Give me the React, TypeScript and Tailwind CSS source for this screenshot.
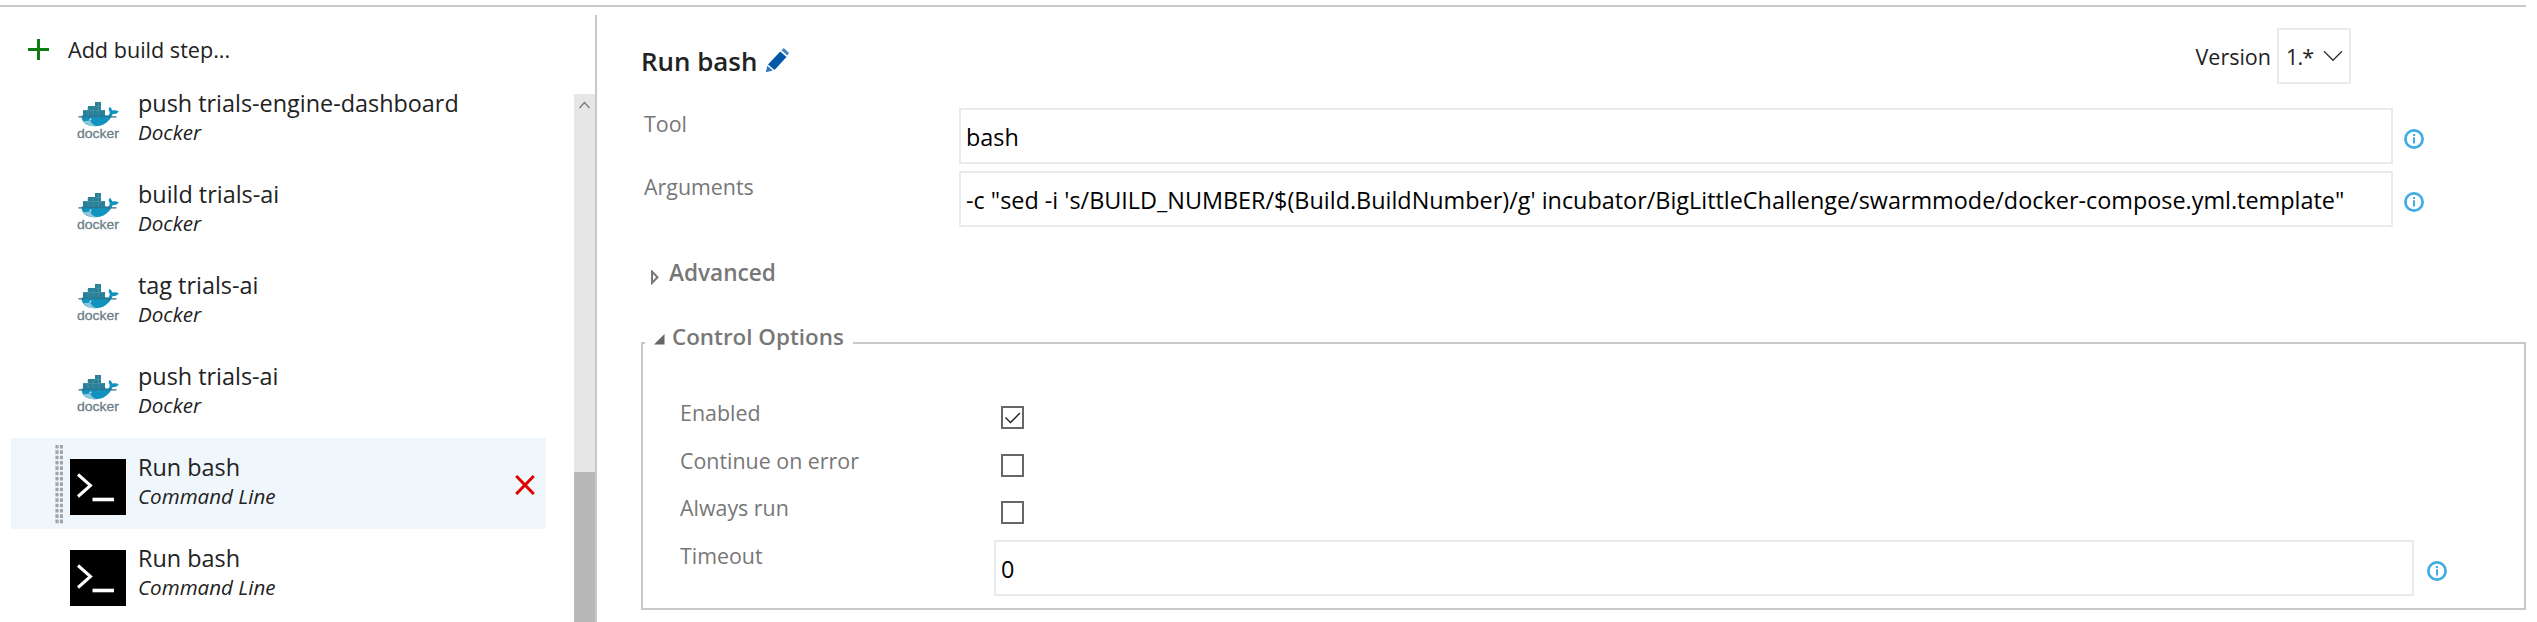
type Step = { name: string; kind: "Docker" | "Command Line"; selected?: boolean };

const steps: Step[] = [
  { name: "push trials-engine-dashboard", kind: "Docker" },
  { name: "build trials-ai", kind: "Docker" },
  { name: "tag trials-ai", kind: "Docker" },
  { name: "push trials-ai", kind: "Docker" },
  { name: "Run bash", kind: "Command Line", selected: true },
  { name: "Run bash", kind: "Command Line" },
];

function DockerIcon() {
  return (
    <svg width="56" height="56" viewBox="0 0 56 56" className="block">
      <path d="M13 22v-7h5v-4h7V7h6v8h4v7z" fill="#2a8097" />
      <path d="M13 15.500h21M18 12v10M23 12v10M28.500 8v14M25 11.500h6" stroke="#4f98ab" strokeWidth="0.600" fill="none" />
      <path d="M11.500 20.500h26c2-.5 2.600-2 2-4-1.300-1.800-.8-3.500.2-4.500 1.600 1 2.300 2.300 2.500 3.600 2-.7 4.500-.4 6.600.6-1.200 2.200-3.500 3-6 2.900C39.500 27 33.500 31.300 25 31.300c-8.500 0-13.500-3.800-13.500-10.800z" fill="#1192bf" />
      <path d="M13.500 26c3 .2 5 0 6.500-1 1 3 3 5.200 6.500 6-6 .8-11-1-13-5z" fill="#8fc7da" />
      <path d="M8.500 21.800h6l2-1 3 1 3-1 3 1 3-1 3 1 3-1 3 1h9" fill="none" stroke="#356f80" strokeWidth="1.200" />
      <circle cx="20.500" cy="24.300" r="0.900" fill="#e8f5f9" />
      <text x="7" y="43.300" textLength="42" lengthAdjust="spacingAndGlyphs" fill="#6b7d86" stroke="#6b7d86" strokeWidth="0.300" className="font-['Liberation_Sans'] text-[13.500px]">docker</text>
    </svg>
  );
}

function TerminalIcon() {
  return (
    <svg width="56" height="56" viewBox="0 0 56 56" className="block bg-black">
      <path d="M8 15.500L20.500 26.500L8 37.500" fill="none" stroke="#fff" strokeWidth="3" />
      <path d="M22.500 40.500H44" stroke="#fff" strokeWidth="3.600" />
    </svg>
  );
}

function InfoIcon() {
  return (
    <svg width="20" height="20" viewBox="0 0 20 20" className="block shrink-0">
      <circle cx="10" cy="10" r="8.600" fill="none" stroke="#3fade3" strokeWidth="2.700" />
      <path d="M10 8.300v6.200M10 5v2" stroke="#3fade3" strokeWidth="2" />
    </svg>
  );
}

function DragHandle() {
  return (
    <svg width="8" height="79" viewBox="0 0 8 79" className="block">
      <path d="M2 0V79M6.500 0V79" stroke="#a0a5a9" strokeWidth="3.200" strokeDasharray="3.600 1.730" />
    </svg>
  );
}

function StepRow({ step }: { step: Step }) {
  return (
    <li className={step.selected ? "flex h-[91px] w-[535px] bg-[#eff6fc]" : "flex h-[91px] w-[535px]"}>
      <div className="w-[59px] shrink-0 pt-[7px] pl-11">{step.selected && <DragHandle />}</div>
      <div className="w-[68px] shrink-0 pt-[21px]">{step.kind === "Docker" ? <DockerIcon /> : <TerminalIcon />}</div>
      <div className="grow pt-[15px] whitespace-nowrap">
        <div className="text-[23.4px] leading-[28px]">{step.name}</div>
        <div className="text-[20.6px] leading-[30px] italic">{step.kind}</div>
      </div>
      {step.selected && (
        <svg width="20" height="20" viewBox="0 0 20 20" className="mt-[37px] mr-[11px] shrink-0">
          <path d="M1.200 1L18.800 19M18.800 1L1.200 19" stroke="#e00000" strokeWidth="3" />
        </svg>
      )}
    </li>
  );
}

function TextField({ value, className }: { value: string; className: string }) {
  return (
    <div className={`h-14 border-2 border-[#eaeaea] pl-[5px] pt-[2px] text-[23.4px] leading-[50px] whitespace-nowrap text-black ${className}`}>
      {value}
    </div>
  );
}

function Checkbox({ checked }: { checked?: boolean }) {
  return (
    <div className="h-[23px] w-[23px] border-2 border-[#666]">
      {checked && (
        <svg width="19" height="19" viewBox="0 0 19 19" className="block">
          <path d="M2.500 9.500L7.500 14.500L17 5" fill="none" stroke="#222" strokeWidth="1.400" />
        </svg>
      )}
    </div>
  );
}

export default function App() {
  return (
    <div className="h-[622px] overflow-hidden bg-white pt-[5px] pr-[11px] font-['Open_Sans','Noto_Sans',sans-serif] text-[#222]">
      <div className="h-[2px] bg-[#c8c8c8]" />
      <div className="flex h-[615px]">
        <aside className="mt-2 flex w-[597px] shrink-0 flex-col border-r-2 border-[#c8c8c8]">
          <div className="flex h-[59px] shrink-0 pl-7">
            <svg width="21" height="21" viewBox="0 0 21 21" className="mt-6 mr-[19px] shrink-0">
              <path d="M10.500 0V21M0 10.500H21" stroke="#107c10" strokeWidth="3" />
            </svg>
            <div className="pt-[22px] text-[21.6px] leading-[26px]">Add build step...</div>
          </div>
          <div className="flex min-h-0 grow">
            <ul className="w-[574px] pl-[11px]">
              {steps.map((step, i) => (
                <StepRow key={i} step={step} />
              ))}
            </ul>
            <div className="mt-5 flex w-[21px] shrink-0 flex-col bg-[#e6e6e6]">
              <svg width="21" height="21" viewBox="0 0 21 21" className="shrink-0">
                <path d="M5.500 14L10.500 8.500L15.500 14" fill="none" stroke="#777" strokeWidth="1.200" />
              </svg>
              <div className="mt-[357px] grow bg-[#b8b8b8]" />
            </div>
          </div>
        </aside>

        <main className="flex grow flex-col pl-11">
          <div className="flex h-[101px] shrink-0">
            <h1 className="pt-[38px] text-[25.9px] leading-[32px] font-semibold">Run bash</h1>
            <svg width="24" height="25" viewBox="0 0 24 25" className="mt-[41px] ml-[8px]">
              <path d="M15.200 3.500L21.500 9L9.500 22L3 16.500z" fill="#0058a8" />
              <path d="M2.300 17.800L7.700 22.600L.8 24.200z" fill="#2f78b8" />
              <path d="M16.500 2.300L18.800 0L24 5L22.300 7.500z" fill="#4487c0" />
            </svg>
            <div className="mr-[175px] ml-auto flex">
              <div className="pt-[37px] text-[21.5px] leading-[26px]">Version</div>
              <div className="mt-[21px] ml-[6px] flex h-14 w-[74px] border-2 border-[#eaeaea] pt-[14px] pl-[7px]">
                <div className="w-[37px] text-[21.5px] leading-[26px] tracking-[-0.8px]">1.*</div>
                <svg width="20" height="12" viewBox="0 0 20 12" className="mt-[6px]">
                  <path d="M1 1.300L10 10.300L19 1.300" fill="none" stroke="#333" strokeWidth="1.400" />
                </svg>
              </div>
            </div>
          </div>

          <div className="flex h-[63px] shrink-0">
            <div className="w-[318px] pt-1 pl-[3px] text-[21.4px] leading-[24px] text-[#777]">Tool</div>
            <TextField value="bash" className="w-[1434px]" />
            <div className="pt-[21px] pl-[11px]"><InfoIcon /></div>
          </div>
          <div className="flex h-[63px] shrink-0">
            <div className="w-[318px] pt-1 pl-[3px] text-[21.4px] leading-[24px] text-[#777]">Arguments</div>
            <TextField
              value={`-c "sed -i 's/BUILD_NUMBER/$(Build.BuildNumber)/g' incubator/BigLittleChallenge/swarmmode/docker-compose.yml.template"`}
              className="w-[1434px]"
            />
            <div className="pt-[21px] pl-[11px]"><InfoIcon /></div>
          </div>

          <div className="flex h-[91px] shrink-0 pt-[27px] pl-[10px]">
            <svg width="8" height="15" viewBox="0 0 8 15" className="mt-[9px] mr-[10px]">
              <path d="M1 1.500V13L6.500 7.300z" fill="#fff" stroke="#777" strokeWidth="2" />
            </svg>
            <h2 className="text-[22.6px] leading-[24px] font-semibold text-[#777]">Advanced</h2>
          </div>

          <fieldset className="h-[285px] shrink-0 border-2 border-[#c8c8c8]">
            <legend className="ml-[2px] flex h-9 items-start bg-white pr-[9px] pl-[9px] text-[22.4px] leading-[24px] font-semibold text-[#777]">
              <svg width="11" height="11" viewBox="0 0 11 11" className="mt-[9px] mr-[7px]">
                <path d="M10.500 0V10.500H0z" fill="#666" />
              </svg>
              <span>Control Options</span>
            </legend>
            <div className="pt-[40px] pl-[37px] text-[21.4px] leading-[24px] text-[#777]">
              <div className="flex h-12">
                <div className="w-[321px]">Enabled</div>
                <div className="pt-[5px]"><Checkbox checked /></div>
              </div>
              <div className="flex h-[47px]">
                <div className="w-[321px]">Continue on error</div>
                <div className="pt-[5px]"><Checkbox /></div>
              </div>
              <div className="flex h-12">
                <div className="w-[321px]">Always run</div>
                <div className="pt-[5px]"><Checkbox /></div>
              </div>
              <div className="flex h-14">
                <div className="w-[314px]">Timeout</div>
                <TextField value="0" className="-mt-1 w-[1420px]" />
                <div className="pt-[17px] pl-[13px]"><InfoIcon /></div>
              </div>
            </div>
          </fieldset>
        </main>
      </div>
    </div>
  );
}
